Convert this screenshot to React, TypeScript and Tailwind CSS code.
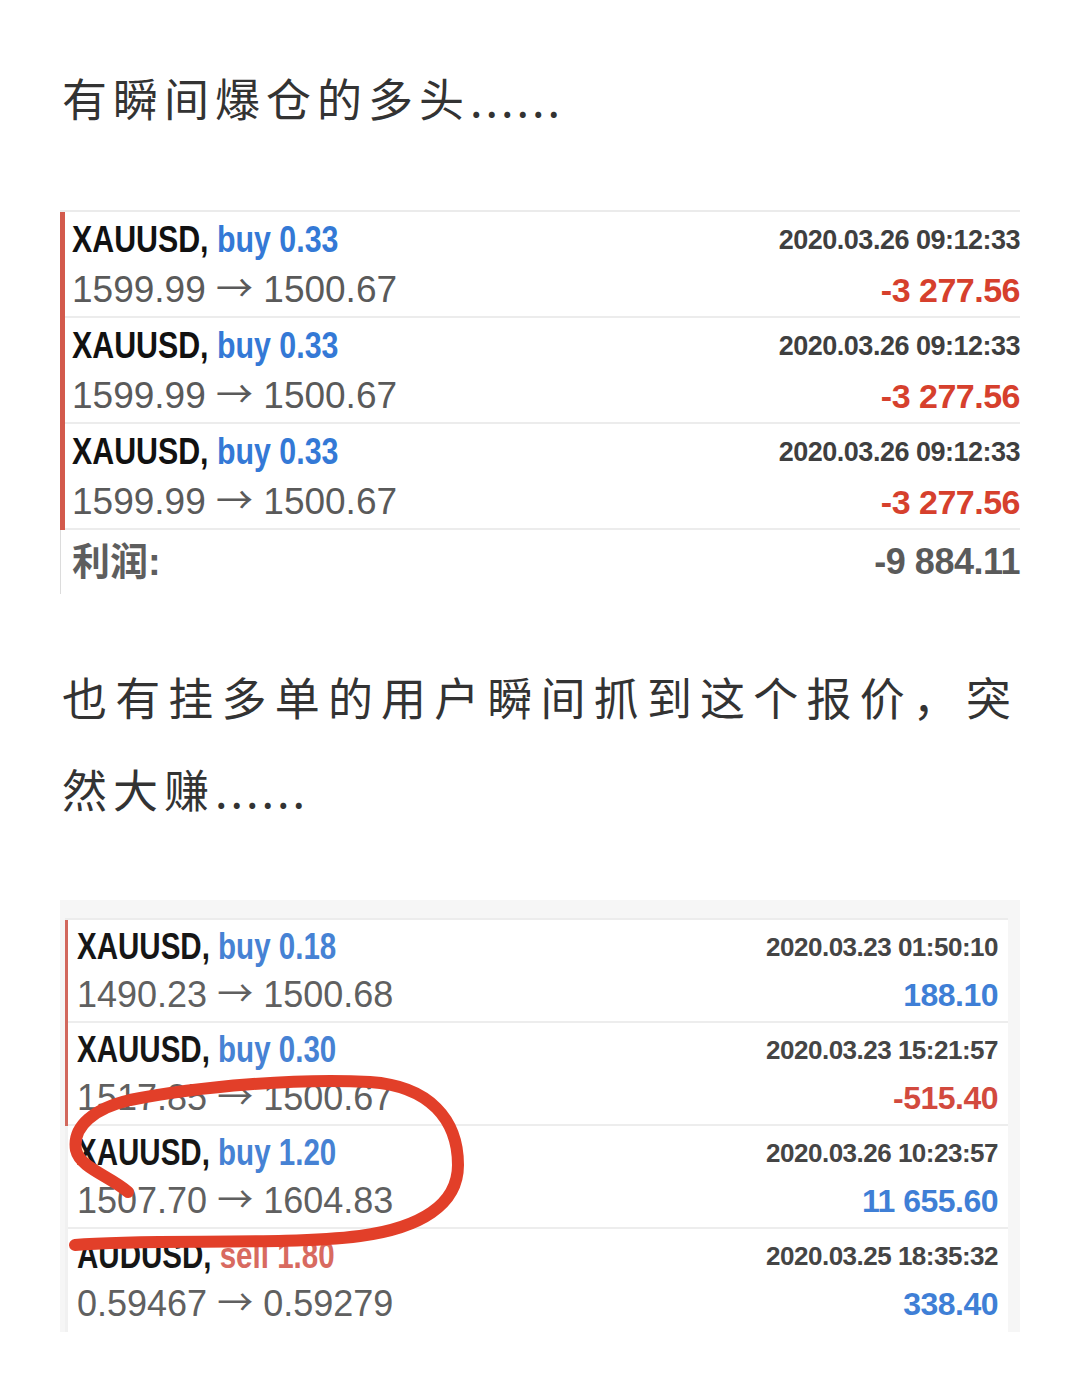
import React from 'react'

type Trade = {
  sym: string
  side: string
  lot: string
  from: string
  to: string
  time: string
  amount: string
  sideColor: string
  amountColor: string
  bar: boolean
}

const lossTrades: Trade[] = [
  { sym: 'XAUUSD,', side: 'buy', lot: '0.33', from: '1599.99', to: '1500.67', time: '2020.03.26 09:12:33', amount: '-3 277.56', sideColor: 'text-[#3479d6]', amountColor: 'text-[#d6402d]', bar: true },
  { sym: 'XAUUSD,', side: 'buy', lot: '0.33', from: '1599.99', to: '1500.67', time: '2020.03.26 09:12:33', amount: '-3 277.56', sideColor: 'text-[#3479d6]', amountColor: 'text-[#d6402d]', bar: true },
  { sym: 'XAUUSD,', side: 'buy', lot: '0.33', from: '1599.99', to: '1500.67', time: '2020.03.26 09:12:33', amount: '-3 277.56', sideColor: 'text-[#3479d6]', amountColor: 'text-[#d6402d]', bar: true },
]

const winTrades: Trade[] = [
  { sym: 'XAUUSD,', side: 'buy', lot: '0.18', from: '1490.23', to: '1500.68', time: '2020.03.23 01:50:10', amount: '188.10', sideColor: 'text-[#4682d4]', amountColor: 'text-[#3f7fd6]', bar: true },
  { sym: 'XAUUSD,', side: 'buy', lot: '0.30', from: '1517.85', to: '1500.67', time: '2020.03.23 15:21:57', amount: '-515.40', sideColor: 'text-[#4682d4]', amountColor: 'text-[#d24a3e]', bar: true },
  { sym: 'XAUUSD,', side: 'buy', lot: '1.20', from: '1507.70', to: '1604.83', time: '2020.03.26 10:23:57', amount: '11 655.60', sideColor: 'text-[#4682d4]', amountColor: 'text-[#3f7fd6]', bar: false },
  { sym: 'AUDUSD,', side: 'sell', lot: '1.80', from: '0.59467', to: '0.59279', time: '2020.03.25 18:35:32', amount: '338.40', sideColor: 'text-[#d86a60]', amountColor: 'text-[#3f7fd6]', bar: false },
]

// 细长箭头用 CJK 字体里的全角箭头
const Arrow = () => <span className="font-['Noto_Sans_CJK_SC',sans-serif] leading-none">→</span>

const LossRow = ({ t }: { t: Trade }) => (
  <div className="flex h-[106px]">
    <div className="w-[5px] bg-[#d35a4c]" />
    <div className="flex flex-1 justify-between border-b-2 border-[#ececec] pl-[7px] pt-[3px]">
      <div>
        <div className="h-[50px] text-[37px] leading-[50px] font-bold">
          <span className="inline-block origin-left scale-x-[0.82] whitespace-pre">
            <span className="text-[#111]">{t.sym}</span> <span className={t.sideColor}>{t.side} {t.lot}</span>
          </span>
        </div>
        <div className="h-[50px] text-[37px] leading-[50px] text-[#5a5a5a]">
          {t.from} <Arrow /> {t.to}
        </div>
      </div>
      <div className="flex flex-col items-end">
        <div className="h-[50px] text-[27px] leading-[50px] font-bold tracking-[-0.5px] text-[#3f3f3f]">{t.time}</div>
        <div className={`h-[50px] text-[34px] leading-[50px] font-bold tracking-[-0.5px] ${t.amountColor}`}>{t.amount}</div>
      </div>
    </div>
  </div>
)

const WinRow = ({ t, last }: { t: Trade; last?: boolean }) => (
  <div className="flex h-[103px]">
    <div className={t.bar ? 'w-[3px] bg-[#d2685d]' : 'w-[3px] bg-[#f1f1f1]'} />
    <div className={`flex flex-1 justify-between pl-[9px] pr-[10px] pt-[2px] ${last ? '' : 'border-b-2 border-[#ededed]'}`}>
      <div>
        <div className="h-[50px] text-[36px] leading-[50px] font-bold">
          <span className="inline-block origin-left scale-x-[0.82] whitespace-pre">
            <span className="text-[#161616]">{t.sym}</span> <span className={t.sideColor}>{t.side} {t.lot}</span>
          </span>
        </div>
        <div className="h-[46px] text-[36px] leading-[46px] text-[#606060]">
          {t.from} <Arrow /> {t.to}
        </div>
      </div>
      <div className="flex flex-col items-end">
        <div className="h-[50px] text-[26px] leading-[50px] font-bold tracking-[-0.5px] text-[#454545]">{t.time}</div>
        <div className={`h-[46px] text-[32px] leading-[46px] font-bold tracking-[-0.5px] ${t.amountColor}`}>{t.amount}</div>
      </div>
    </div>
  </div>
)

export default function App() {
  return (
    <div className="relative min-h-[1398px] w-[1075px] bg-white pl-[62px] pr-[58px] font-['Liberation_Sans','Noto_Sans_CJK_SC',sans-serif]">
      {/* 标题一 */}
      <p className="pt-[68px] font-['Noto_Sans_CJK_SC',sans-serif] text-[45px] leading-[60px] tracking-[6px] text-[#333]">
        有瞬间爆仓的多头<span className="tracking-[3px]">......</span>
      </p>

      {/* 爆仓单 */}
      <div className="-ml-[2px] mt-[82px] w-[960px] border-t-2 border-[#ebebeb]">
        {lossTrades.map((t, i) => (
          <LossRow t={t} key={i} />
        ))}
        <div className="flex h-[64px] items-center justify-between border-l border-[#dcdcdc] pl-[11px]">
          <span className="text-[38px] font-bold text-[#5e5e5e]">利润:</span>
          <span className="text-[36px] font-bold tracking-[-0.5px] text-[#5a5a5a]">-9 884.11</span>
        </div>
      </div>

      {/* 标题二 */}
      <p className="mt-[57px] text-justify font-['Noto_Sans_CJK_SC',sans-serif] text-[45px] leading-[92px] tracking-[6px] text-[#333]">
        也有挂多单的用户瞬间抓到这个报价，突然大赚<span className="tracking-[3px]">......</span>
      </p>

      {/* 盈利单 */}
      <div className="-ml-[2px] mt-[65px] w-[960px] bg-[#f6f6f6] pt-[18px] pl-[5px] pr-[12px]">
        <div className="border-t-2 border-[#ececec] bg-white">
          {winTrades.map((t, i) => (
            <WinRow t={t} key={i} last={i === winTrades.length - 1} />
          ))}
        </div>
      </div>

      {/* 红圈 */}
      <svg className="pointer-events-none absolute left-0 top-0" width="1075" height="1398" viewBox="0 0 1075 1398">
        <path
          d="M 128 1192 C 110 1176, 80 1168, 76 1150 C 72 1126, 95 1108, 130 1100 C 200 1086, 300 1078, 370 1082 C 430 1086, 458 1120, 458 1165 C 458 1205, 420 1228, 360 1236 C 280 1246, 150 1238, 75 1245"
          fill="none"
          stroke="#e23f29"
          strokeWidth="12"
          strokeLinecap="round"
          strokeLinejoin="round"
        />
      </svg>
    </div>
  )
}
